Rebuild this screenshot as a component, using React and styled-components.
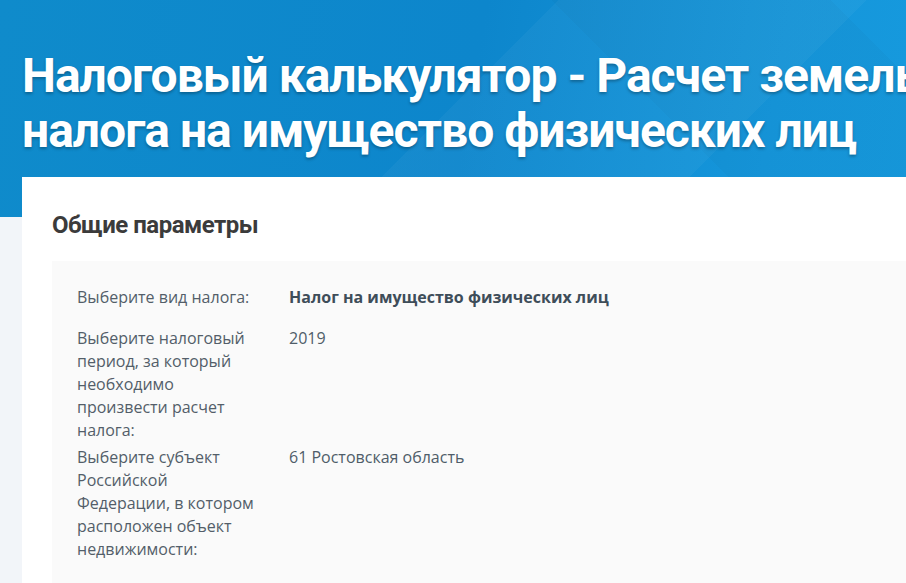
import React from 'react';
import styled, { createGlobalStyle } from 'styled-components';

const GlobalStyle = createGlobalStyle`
  html, body {
    margin: 0;
    overflow: hidden;
  }
  body {
    background: #f2f5f9;
    font-family: "Open Sans", "Noto Sans", sans-serif;
  }
`;

const Page = styled.div`
  width: 1180px;
`;

const Hero = styled.header`
  height: 217px;
  box-sizing: border-box;
  padding: 48px 22px 0;
  background:
    linear-gradient(135deg, rgba(255,255,255,0) 40%, rgba(255,255,255,0.035) 40%, rgba(255,255,255,0.035) 62%, rgba(255,255,255,0) 62%),
    linear-gradient(45deg, rgba(0,0,0,0) 55%, rgba(0,0,0,0.025) 55%, rgba(0,0,0,0.025) 75%, rgba(0,0,0,0) 75%),
    linear-gradient(100deg, #0f8bcb 0%, #0d86cc 40%, #1596db 65%, #18a0e1 100%);
`;

const Title = styled.h1`
  margin: 0;
  color: #fff;
  font-family: Roboto, "DejaVu Sans Condensed", sans-serif;
  font-weight: 700;
  font-size: 48px;
  line-height: 55px;
  letter-spacing: -1px;
  white-space: nowrap;
  text-shadow: 0 2px 3px rgba(0, 0, 0, 0.28);
`;

const Card = styled.section`
  margin: -40px 0 0 22px;
  background: #fff;
  padding: 33px 30px 40px;
`;

const Heading = styled.h2`
  margin: 0 0 21px;
  color: #3b3b3b;
  font-family: Roboto, "DejaVu Sans Condensed", sans-serif;
  font-weight: 700;
  font-size: 24px;
  line-height: 30px;
  letter-spacing: -0.5px;
`;

const Panel = styled.div`
  background: #fafafa;
  padding: 25px 25px 30px;
`;

const Row = styled.div`
  display: grid;
  grid-template-columns: 212px 1fr;
  padding-bottom: ${p => (p.$first ? 18 : 4)}px;
  font-size: 16px;
  line-height: 23px;
`;

const Label = styled.div`
  color: #535e69;
  padding-right: 30px;
`;

const Value = styled.div`
  color: ${p => (p.$bold ? '#3e4d59' : '#4f5d69')};
  font-weight: ${p => (p.$bold ? 700 : 400)};
`;

const params = [
  { label: 'Выберите вид налога:', value: 'Налог на имущество физических лиц', bold: true },
  { label: 'Выберите налоговый период, за который необходимо произвести расчет налога:', value: '2019' },
  { label: 'Выберите субъект Российской Федерации, в котором расположен объект недвижимости:', value: '61 Ростовская область' },
];

export default function App() {
  return (
    <Page>
      <GlobalStyle />
      <Hero>
        <Title>
          Налоговый калькулятор - Расчет земельного налога и
          <br />
          налога на имущество физических лиц
        </Title>
      </Hero>
      <Card>
        <Heading>Общие параметры</Heading>
        <Panel>
          {params.map((p, i) => (
            <Row key={i} $first={i === 0}>
              <Label>{p.label}</Label>
              <Value $bold={p.bold}>{p.value}</Value>
            </Row>
          ))}
        </Panel>
      </Card>
    </Page>
  );
}
